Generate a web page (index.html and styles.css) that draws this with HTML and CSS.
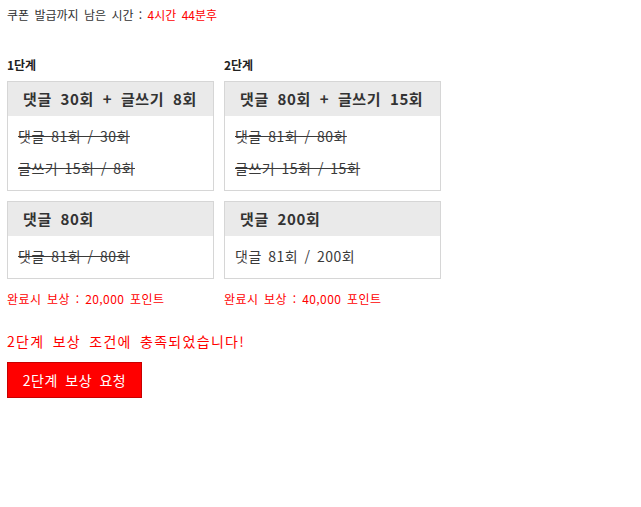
FILE: index.html
```html
<!DOCTYPE html>
<html lang="ko">
<head>
<meta charset="utf-8">
<title>쿠폰 발급</title>
<link rel="stylesheet" href="styles.css">
</head>
<body>
<div class="page">
  <p class="timer">쿠폰 발급까지 남은 시간 : <span class="red">4시간 44분후</span></p>
  <div class="stages">
    <section class="stage stage-1">
      <h3 class="stage-title">1단계</h3>
      <div class="mission">
        <div class="mission-head">댓글 30회 + 글쓰기 8회</div>
        <div class="mission-body">
          <p class="done">댓글 81회 / 30회</p>
          <p class="done">글쓰기 15회 / 8회</p>
        </div>
      </div>
      <div class="mission">
        <div class="mission-head">댓글 80회</div>
        <div class="mission-body">
          <p class="done">댓글 81회 / 80회</p>
        </div>
      </div>
      <p class="reward">완료시 보상 : 20,000 포인트</p>
    </section>
    <section class="stage stage-2">
      <h3 class="stage-title">2단계</h3>
      <div class="mission">
        <div class="mission-head">댓글 80회 + 글쓰기 15회</div>
        <div class="mission-body">
          <p class="done">댓글 81회 / 80회</p>
          <p class="done">글쓰기 15회 / 15회</p>
        </div>
      </div>
      <div class="mission">
        <div class="mission-head">댓글 200회</div>
        <div class="mission-body">
          <p>댓글 81회 / 200회</p>
        </div>
      </div>
      <p class="reward">완료시 보상 : 40,000 포인트</p>
    </section>
  </div>
  <p class="notice">2단계 보상 조건에 충족되었습니다!</p>
  <button class="request" type="button">2단계 보상 요청</button>
</div>
</body>
</html>
```
FILE: styles.css
```css
html, body {
  margin: 0;
  padding: 0;
  background: #fff;
}
body {
  font-family: "Noto Sans CJK KR", "Noto Sans", sans-serif;
  color: #333;
}
.page {
  padding: 6px 7px;
}
p { margin: 0; }
.timer {
  font-size: 12px;
  line-height: 18px;
  word-spacing: 2px;
  color: #333;
}
.red { color: #ff0000; }
.stages {
  display: flex;
  gap: 10px;
  margin-top: 33px;
}
.stage {
  display: flex;
  flex-direction: column;
}
.stage-1 { width: 207px; }
.stage-2 { width: 217px; }
.stage-title {
  margin: 0 0 8px 0;
  font-size: 12px;
  line-height: 16px;
  font-weight: bold;
  color: #222;
}
.mission {
  border: 1px solid #d6d6d6;
  margin-bottom: 10px;
}
.mission-head {
  height: 34px;
  line-height: 34px;
  background: #eaeaea;
  padding-left: 15px;
  font-size: 15px;
  font-weight: bold;
  letter-spacing: 0.6px;
  word-spacing: 4px;
  color: #333;
  white-space: nowrap;
}
.mission-body {
  padding: 4px 10px 6px;
  font-size: 14px;
  line-height: 32px;
  letter-spacing: 0.5px;
  word-spacing: 2px;
  color: #3a3a3a;
  white-space: nowrap;
}
.mission-body .done {
  text-decoration: line-through;
}
.reward {
  margin-top: 2px;
  font-size: 12px;
  line-height: 16px;
  letter-spacing: 0.4px;
  word-spacing: 2px;
  color: #ff0000;
}
.notice {
  margin-top: 24px;
  font-size: 14px;
  line-height: 20px;
  letter-spacing: 1.3px;
  word-spacing: 3px;
  color: #ff0000;
}
.request {
  margin-top: 11px;
  width: 135px;
  height: 36px;
  background: #ff0000;
  border: 1px solid #c80000;
  color: #fff;
  font-family: "Noto Sans CJK KR", "Noto Sans", sans-serif;
  font-size: 14px;
  letter-spacing: 0.5px;
  word-spacing: 3px;
  padding: 0;
  cursor: pointer;
}
```
